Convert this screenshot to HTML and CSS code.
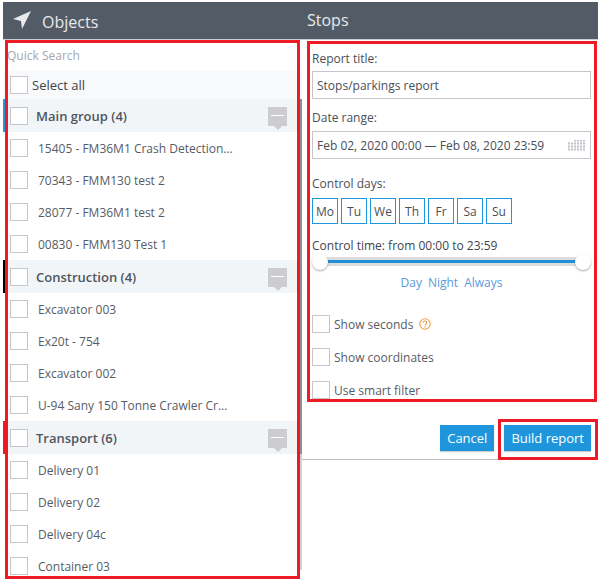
FILE: index.html
```html
<!DOCTYPE html>
<html lang="en">
<head>
<meta charset="utf-8">
<title>Stops report</title>
<link rel="stylesheet" href="styles.css">
</head>
<body>
<div class="dialog">
  <header class="head">
    <div class="head-left">
      <svg class="nav-icon" width="20" height="20" viewBox="0 0 20 20"><path d="M18 2 L0 10 L8 12 L9 20 Z" fill="#e8eaec"/></svg>
      <span class="head-title">Objects</span>
    </div>
    <div class="head-right">Stops</div>
  </header>
  <div class="columns">
    <section class="objects">
      <div class="search">Quick Search</div>
      <div class="select-all"><span class="check"></span><span>Select all</span></div>
      <div class="group group-blue"><span class="check"></span><span class="group-name">Main group (4)</span><span class="collapse"></span></div>
      <div class="item"><span class="check"></span><span>15405 - FM36M1 Crash Detection...</span></div>
      <div class="item"><span class="check"></span><span>70343 - FMM130 test 2</span></div>
      <div class="item"><span class="check"></span><span>28077 - FM36M1 test 2</span></div>
      <div class="item"><span class="check"></span><span>00830 - FMM130 Test 1</span></div>
      <div class="group group-black"><span class="check"></span><span class="group-name">Construction (4)</span><span class="collapse"></span></div>
      <div class="item"><span class="check"></span><span>Excavator 003</span></div>
      <div class="item"><span class="check"></span><span>Ex20t - 754</span></div>
      <div class="item"><span class="check"></span><span>Excavator 002</span></div>
      <div class="item"><span class="check"></span><span>U-94 Sany 150 Tonne Crawler Cr...</span></div>
      <div class="group group-red"><span class="check"></span><span class="group-name">Transport (6)</span><span class="collapse"></span></div>
      <div class="item"><span class="check"></span><span>Delivery 01</span></div>
      <div class="item"><span class="check"></span><span>Delivery 02</span></div>
      <div class="item"><span class="check"></span><span>Delivery 04c</span></div>
      <div class="item"><span class="check"></span><span>Container 03</span></div>
      <div class="scrollbar"><div class="scroll-thumb"></div></div>
    </section>
    <section class="form-side">
      <div class="form">
        <div class="label first">Report title:</div>
        <div class="field">Stops/parkings report</div>
        <div class="label">Date range:</div>
        <div class="field date">
          <span>Feb 02, 2020 00:00 — Feb 08, 2020 23:59</span>
          <svg class="cal" width="17" height="11" viewBox="0 0 17 11"><path d="M7 1h1M10 1h1M13 1h1M16 1h1M1 4h1M4 4h1M7 4h1M10 4h1M13 4h1M16 4h1M1 7h1M4 7h1M7 7h1M10 7h1M13 7h1M16 7h1M1 10h1M4 10h1M7 10h1M10 10h1M13 10h1M16 10h1" stroke="#7f848b" stroke-width="2" transform="translate(-.5 -.5)"/></svg>
        </div>
        <div class="label days-label">Control days:</div>
        <div class="days">
          <span class="day">Mo</span><span class="day">Tu</span><span class="day">We</span><span class="day">Th</span><span class="day">Fr</span><span class="day">Sa</span><span class="day">Su</span>
        </div>
        <div class="label time-label">Control time: from 00:00 to 23:59</div>
        <div class="slider"><div class="track"><div class="fill"></div></div><span class="knob"></span><span class="knob"></span></div>
        <div class="presets"><span>Day</span><span>Night</span><span>Always</span></div>
        <div class="option opt-first"><span class="check"></span><span>Show seconds</span>
          <svg class="help" width="12" height="12" viewBox="0 0 12 12"><circle cx="6" cy="6" r="5.200" fill="none" stroke="#f5a04c" stroke-width="1.100"/><path d="M4.300 4.700a1.700 1.700 0 1 1 2.600 1.400c-.6.400-.9.700-.9 1.300" fill="none" stroke="#f5a04c" stroke-width="1.100"/><circle cx="6" cy="9" r=".7" fill="#f5a04c"/></svg>
        </div>
        <div class="option"><span class="check"></span><span>Show coordinates</span></div>
        <div class="option"><span class="check"></span><span>Use smart filter</span></div>
      </div>
      <div class="actions">
        <button class="btn" type="button">Cancel</button>
        <button class="btn" type="button">Build report</button>
      </div>
    </section>
  </div>
  <div class="mark mark-left"></div>
  <div class="mark mark-right"></div>
  <div class="mark mark-build"></div>
</div>
</body>
</html>
```

FILE: styles.css
```css
* { box-sizing: border-box; }
html, body { margin: 0; padding: 0; background: #fff; }
body {
  width: 600px;
  height: 583px;
  overflow: hidden;
  font-family: "Open Sans", sans-serif;
  font-size: 12px;
  color: #4a4f57;
}
.dialog { position: relative; width: 600px; height: 583px; padding: 2px 2px 0 3px; }
.head {
  display: flex;
  height: 38px;
  background: #535c66;
  border-bottom: 1px solid #c9ccd0;
  color: #e8eaec;
  font-size: 16px;
}
.head-left { width: 301px; display: flex; align-items: center; padding-left: 10px; gap: 9px; }
.nav-icon { flex: none; margin-top: -3px; }
.head-title { margin-top: 2px; }
.head-right { padding: 7px 0 0 3px; }
.columns { display: flex; height: 543px; }
.objects { position: relative; width: 299px; height: 536px; overflow: hidden; flex: none; }
.search { height: 31px; padding: 8px 0 0 4px; color: #a4a9b0; font-size: 12px; line-height: 16px; }
.select-all { display: flex; align-items: center; height: 28px; padding-left: 7px; background: #f7f9fa; font-size: 13px; color: #3f444b; }
.select-all .check { margin-right: 4px; }
.check { display: block; flex: none; width: 18px; height: 18px; border: 1px solid #c4c5cd; background: #fff; }
.group { position: relative; display: flex; align-items: center; height: 33px; padding-left: 7px; background: #f2f5f8; font-size: 13px; font-weight: 600; color: #4f5660; }
.group::before { content: ""; position: absolute; left: 0; top: 0; width: 5px; height: 100%; }
.group-blue::before { background: #1f96e0; }
.group-black::before { background: #000; }
.group-red::before { background: #ed1c24; }
.group-name { margin-left: 8px; }
.collapse { position: absolute; left: 265px; top: 8px; width: 19px; height: 19px; background: #cdcdcf; }
.collapse::before { content: ""; position: absolute; left: 3px; top: 8px; width: 13px; height: 1px; background: #fff; }
.collapse::after { content: ""; position: absolute; left: 6px; top: 19px; border: 4px solid transparent; border-bottom: 0; border-top-color: #cdcdcf; }
.item { display: flex; align-items: center; height: 32px; padding-left: 7px; color: #565c65; }
.item .check { margin-right: 10px; }
.scrollbar { position: absolute; left: 296px; top: 59px; width: 3px; height: 471px; background: #d0d0d0; }
.scroll-thumb { width: 3px; height: 355px; background: #8f8f8f; }
.form-side { width: 295px; height: 420px; border-bottom: 1px solid #b9bbc0; flex: none; }
.form { height: 379px; padding: 0 6px 0 10px; color: #4a4f57; }
.label { line-height: 16px; }
.first { padding-top: 11px; height: 31px; }
.field { display: flex; align-items: center; height: 28px; padding-left: 4px; border: 1px solid #c4c5cd; color: #4a4f57; }
.date { justify-content: space-between; padding-right: 5px; }
.cal { flex: none; }
.field + .label { padding-top: 11px; height: 32px; }
.field.date + .label { padding-top: 17px; height: 39px; }
.days { display: flex; gap: 3px; }
.day { display: flex; align-items: center; justify-content: center; width: 26px; height: 26px; border: 1px solid #1f96e0; }
.time-label { padding-top: 14px; height: 28px; color: #3f444b; }
.slider { position: relative; display: flex; justify-content: space-between; align-items: center; height: 20px; }
.track { position: absolute; left: 8px; right: 8px; top: 5px; height: 9px; background: #dcdcdc; display: flex; align-items: center; }
.fill { width: 100%; height: 3px; background: #1f8fd8; }
.knob { position: relative; display: block; width: 16px; height: 16px; border-radius: 50%; background: #fff; box-shadow: 0 1px 2px rgba(0,0,0,.35); }
.presets { display: flex; justify-content: center; gap: 6px; color: #5b9bdc; margin-top: 3px; line-height: 16px; height: 16px; }
.option { display: flex; align-items: center; gap: 4px; height: 18px; margin-bottom: 15px; white-space: nowrap; color: #565c65; }
.opt-first { margin-top: 24px; }
.option .help { margin-left: 2px; }
.actions { display: flex; justify-content: flex-end; gap: 10px; padding: 6px 6px 0 0; }
.btn { height: 26px; padding: 0 7px; border: 0; background: #1f96dc; color: #fff; font: 500 13px "Open Sans", sans-serif; box-shadow: 0 1px 1px rgba(0,0,0,.2); }
.mark { position: absolute; border: 3px solid #ed1c24; pointer-events: none; }
.mark-left { left: 5px; top: 40px; width: 295px; height: 539px; }
.mark-right { left: 307px; top: 41px; width: 290px; height: 361px; }
.mark-build { left: 498px; top: 419px; width: 100px; height: 41px; }
```
